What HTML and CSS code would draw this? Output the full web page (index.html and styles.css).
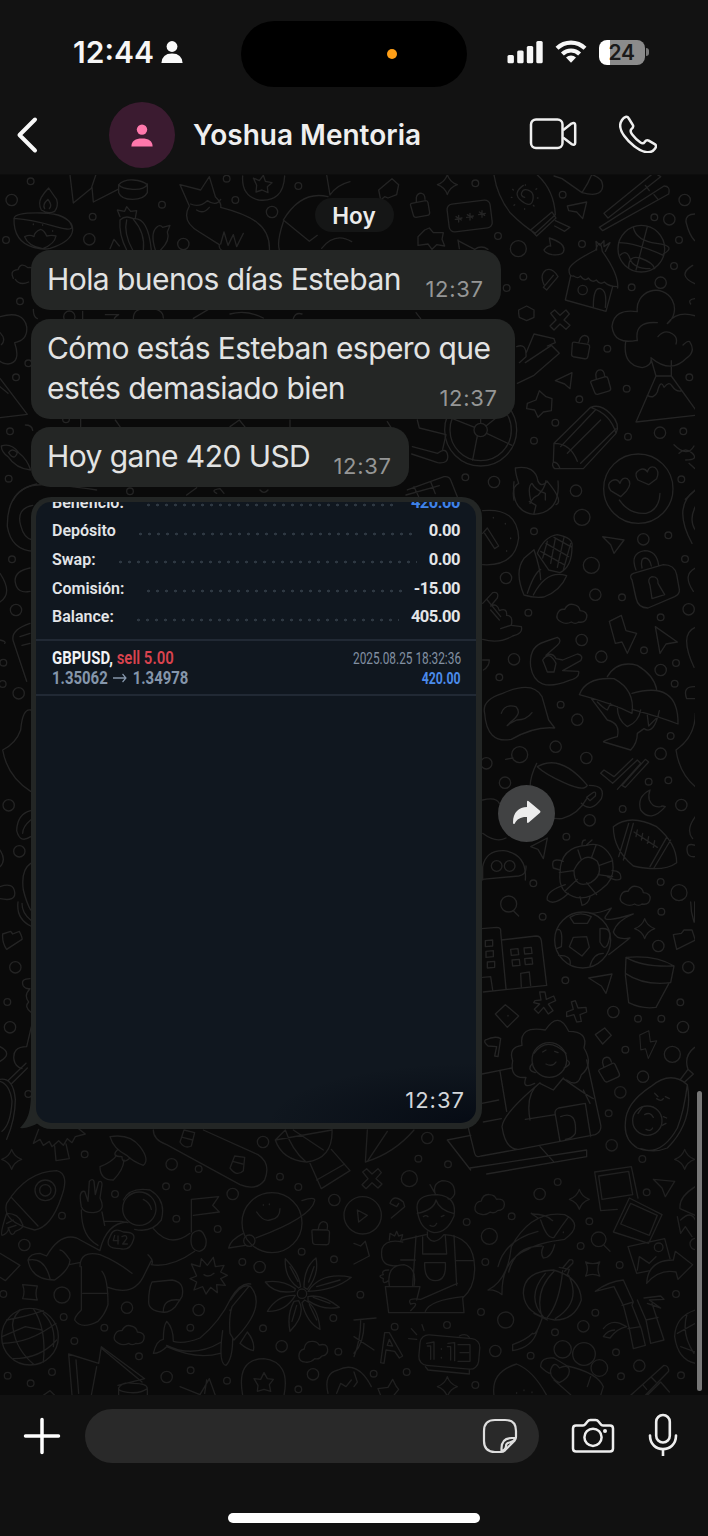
FILE: index.html
```html
<!DOCTYPE html>
<html lang="es">
<head>
<meta charset="utf-8">
<title>Yoshua Mentoria</title>
<link rel="stylesheet" href="styles.css">
</head>
<body>
<div class="phone">
  <header class="top">
    <div class="status">
      <div class="clock"><span class="clock-time">12:44</span>
        <svg width="22" height="24" viewBox="0 0 22 24" fill="#fafafa"><circle cx="11" cy="6.500" r="5.400"/><path d="M.4 23q.6-9.600 10.600-9.600T21.600 23z"/></svg>
      </div>
      <div class="island"><span class="island-dot"></span></div>
      <div class="indicators">
        <svg width="37" height="24" viewBox="0 0 37 24" fill="#f6f6f6"><rect x=".5" y="15" width="6.400" height="8.200" rx="1.500"/><rect x="10.200" y="10.500" width="6.400" height="12.700" rx="1.500"/><rect x="19.800" y="6" width="6.400" height="17.200" rx="1.500"/><rect x="29.300" y="1" width="6.400" height="22.200" rx="1.500"/></svg>
        <svg class="wifi" width="32" height="24" viewBox="0 0 32 24" fill="none" stroke="#f6f6f6" stroke-width="4.200"><path d="M2 8.300a20 20 0 0 1 28 0"/><path d="M7.400 14a12.300 12.300 0 0 1 17.200 0"/><path d="M16 22.800l-5-5.200a7.300 7.300 0 0 1 10 0z" fill="#f6f6f6" stroke="none"/></svg>
        <div class="battery"><span>24</span></div><i class="battery-tip"></i>
      </div>
    </div>
    <nav class="nav">
      <svg class="back" width="24" height="38" viewBox="0 0 24 38" fill="none" stroke="#f8f8f8" stroke-width="4" stroke-linecap="round" stroke-linejoin="round"><path d="M20 3.500L4.500 19 20 34.500"/></svg>
      <div class="avatar"><svg width="22" height="23" viewBox="0 0 22 23" fill="#ff78ac"><circle cx="11" cy="5.600" r="5.200"/><path d="M.4 22.400c0-5.500 4-8 10.600-8s10.600 2.500 10.600 8z"/></svg></div>
      <h1 class="name">Yoshua Mentoria</h1>
      <svg class="video" width="48" height="32" viewBox="0 0 48 32" fill="none" stroke="#efefef" stroke-width="2.500" stroke-linejoin="round"><rect x="2" y="1.500" width="31.500" height="28.600" rx="5"/><path d="M34 12.200l8.500-6.600q3.700-1.500 3.700 1.500v17.600q0 3-3.700 1.400L34 19.500"/></svg>
      <svg class="call" width="38" height="38" viewBox="0 0 38 38" fill="none" stroke="#efefef" stroke-width="2.500" stroke-linejoin="round"><path d="M3 5C5 2 8 .4 9.800 3.500l4.100 6.700c.9 1.500-.1 2.700-1.500 4-1.700 1.700-.9 3 .8 5.200 2.300 3 5 5.700 8 7.800 2 1.500 3.200 1.500 4.500-.3 1.200-1.500 2.500-2 4-1.200l6 3.500c2 1.200 1.500 2.700.2 4.500-4.500 6.300-13 3.400-20.600-2.500C7.600 25.300.6 16.500 1.200 9.800 1.400 7.800 2 6.500 3 5z"/></svg>
    </nav>
  </header>

  <main class="chat">
    <svg class="wallpaper" viewBox="0 175 708 1220" width="708" height="1220" fill="none" stroke-linecap="round" stroke-linejoin="round">
      <defs>
        <clipPath id="edge"><rect x="0" y="175" width="695" height="1220"/></clipPath>
        <circle id="s" r="10"/><circle id="m" r="17"/><circle id="l" r="24"/>
        <path id="star" d="M0-30Q7-8 30 0Q7 8 0 30Q-7 8-30 0Q-7-8 0-30z"/>
        <path id="cloud" d="M-34 24q-18-8-12-24t22-14q10-20 28-14q16 4 18 18q24 2 20 20t-24 14q-10 8-22 0q-16 8-30 0z"/>
        <path id="lock" d="M-24-8l42-8q6 0 7 6l5 30q0 7-7 8l-34 6q-7 0-8-7l-8-28q-2-6 3-7zM-10-12v-14q4-14 16-12q10 2 10 18"/>
        <path id="cross" d="M-28-20l12-10l16 16l18-16l10 12l-16 18l18 16l-12 12l-18-16l-18 18l-12-12l18-18z"/>
        <path id="bolt" d="M-26-34L8-50L14-8L38-12L6 54L-4 18L-22 22z"/>
      </defs>
      <g clip-path="url(#edge)">
        <g class="doodle" transform="translate(0 170) scale(.33333)">
          <path d="M42 145Q40 215 100 232Q130 240 150 235Q215 215 218 180Q220 148 165 133M42 145q4-18 84-16t90 42q-2 14-60-4t-114-22zM124 120q-10-20 0-38q8-14 22-28q12 18 24 34q6 20-6 36q-18 10-40-4zM134 116q-8-12 10-28q14 18 4 28M74 200q16-8 28 0q0-14 20-22q12 4 18 20q16-4 28 0q-4 24-40 38q-44-8-54-36zM100 162v2M128 164v2M158 182v2"/>
          <path d="M210 15l10 84l54-44l14-42M276 52l4 44l74-38M356 44v24q8 20 42 20t44-20v-26M356 44q16-16 44-14t42 14q-10 16-44 14t-42-14z"/>
          <path d="M540 44l28 64q-26 46 30 78l60 38q-4 20 30 24M540 44l62 16l26-40l18 60q20 20 16 32q78 20 110 46q40 30 36 88M572 102q26 12 50-10q26 18 40-4M590 120q20 14 38-8M662 222l10-36l12 40l16-32l10 36l20-40"/>
          <path d="M360 150q16-16 40-4q44-6 54 94M360 150q-4 44 20 90M380 150q-10 40 18 90M400 148q36 40 30 92M466 240q-16-50 4-68q10-10 18 0l22-6l-8 20q10 24-20 54M360 140l-8-20l22 4l6-14l12 14l18-2l-4 22M330 236l12-28l16 20"/>
          <path d="M728 18q-4 60 48 72q74 8 78-72M760 24l18 8l12-16l6 18l20 4l-14 12l2 18l-18-8l-18 6l2-20zM850 150q54-90 134-70M850 150l78 64l24-18M850 155q-20 60-12 85M980 15l10 60q20-30 60-40M965 235q40-50 90-20"/>
          <path d="M40 325q-12-24 14-26q8-24 30-6q26-4 20 24M46 328q14 20 40 8M0 440q70-20 80 30q4 40-36 48q20 60-20 64q-16 0-24-8M0 488q20 20 4 36M0 625l82 108l-82 10M0 650l24 20M100 418q0 24 12 28M76 765q20 0 22 16M4 828q30-10 52 20q26 20 36 52q-44-4-68-40q-20-14-20-32zM26 848q10-16 26 0q-10 26-26 0M40 990q20-40 70-45q40-5 180 15"/>
          <path d="M248 424v22M316 434h40q-16 10-12 14M400 446q0-32 40-30q50-2 50 28M580 445l44-26M690 432q50-14 100 12M880 446q6-20 26-14M242 748v24M346 750l14 20M690 770l28-20l18 22M870 750v22M560 975l30-22M650 970q-20-10 10-14l12 14M780 960q12 14 24 0"/>
          <use href="#m" x="35" y="90"/><use href="#s" x="92" y="34"/><use href="#m" x="268" y="208"/><use href="#s" x="278" y="140"/><use href="#s" x="486" y="104"/><use href="#m" x="816" y="126"/><use href="#s" x="706" y="90"/><use href="#s" x="680" y="26"/><use href="#s" x="895" y="48"/><use href="#m" x="550" y="222"/><use href="#s" x="18" y="210"/><use href="#s" x="60" y="394"/><use href="#s" x="48" y="622"/><use href="#s" x="85" y="580"/><use href="#s" x="30" y="784"/><use href="#s" x="26" y="926"/><use href="#m" x="208" y="440"/><use href="#s" x="390" y="964"/><use href="#s" x="198" y="748"/>
        </g>
        <g class="doodle" transform="translate(354 170) scale(.33333)">
          <path d="M420 15Q430 80 470 130Q510 170 544 190L604 134Q600 60 550 15M530 180l64-54l12 18l-58 54zM604 152l44 20l-16 12l-30-16M512 82q-14-4-8-16t22-4t10 30t-34 0t6-46M514 44v2M476 58l2 2M472 82h2M480 106l2-2M512 116v2M548 56l-2 2M552 84h-2M540 108l-2-2"/>
          <rect x="282" y="96" width="130" height="84" rx="16" transform="rotate(-7 347 138)"/><path d="M314 136v20M304 148l20-4M306 140l16 10M348 130v20M338 142l20-4M340 134l16 10M384 122v20M374 134l20-4M376 126l16 10"/>
          <path d="M600 18l24 8l60 42q50 14 60-10q10-30-30-44M684 68q20-30 30-56M750 130L900 8l20 12L762 144zM736 172L930 48q20 0 14 24L746 182zM874 46l12 16M900 74l12 14M640 108l58-12l-12 50l-18-20l-24-4z"/>
          <circle cx="862" cy="236" r="70"/><path d="M794 218q50 0 134 38M838 172q8 40 70 48t20 32M824 294q0-40 34-30q40 14 44 32M798 256q20-20 30 10t60 30M880 170l-34 130"/>
          <path d="M645 300q0-20 80-60q14-40 20 4q50 70 46 110M650 318l-16 72l122 34l20-74M645 300q0 20 14 18q14 10 20 0q14 18 24 6q12 16 24 6q12 16 24 6q14 14 40 14M718 410q0-60 22-54q20 6 14 56M728 240l-2-26l12 12l12-14v18l18-12l-14 26"/><circle cx="686" cy="360" r="14"/>
          <path d="M850 425a56 56 0 1 1 90 36M850 425q-70-10-76 44q6 56 74 42M850 512q-10-60 60-54M815 515q-10 70 50 78q30-6 26-30q60 50 106 2q30-20 10-50q-6-4-20 10M940 460q30-40 85-22M912 500q20-24 44-8q16 10 10 30M892 570l14 48h46v-46M906 618l-60 138l178-20M952 618l72 100M880 676q20 12 30-10q10-40 20-14q16-20 24-4q14 20 30 14"/>
          <path d="M600 820L710 712q30-12 60 20q30 30 16 58L688 896H602q-10-10-4-20zM620 830L724 720M680 880L786 776M640 850L740 750M600 820q50 0 70 54M710 712q60 20 76 78M598 876q14 0 20 20"/>
          <circle cx="380" cy="780" r="108"/><circle cx="380" cy="780" r="92"/><circle cx="380" cy="780" r="20"/><path d="M380 760V690M398 790l76 36M370 798l-14 72M362 772l-76-30M396 768l60-48M175 830l76 20q26-20 30 6t-30 22l-78-26M190 750l6 24l80 20l-10 44M100 755l50 80"/>
          <circle cx="853" cy="956" r="104"/><path d="M800 980l-30-18q-14-20 4-30q16-8 24 8q6-20 22-14q16 12-2 36zM884 944l-32-14q-14-20 4-30q16-8 24 6q6-20 22-14q16 12 6 34z"/>
          <path d="M480 990q-8-40 14-50q-10-30-10-46q60-10 68 40q10 20 28 0q50 60 26 70M530 990q-10-40 4-50q10 20 40 30v20M160 960l110-40q16-2 20 10l20 50M180 950l14 30M230 935l14 36M156 975l100-28"/>
          <path d="M192 200l20-20l14-6l12 14h30l-4 20l8 20l-24-4l-14 14l-12-16l-30 4zM570 240q10-14 20-12l-4-24q44 14 44 34t-36 16q-20-4-24-14zM494 430v-10l24-12l22 12v22l-22 10l-22-10zM312 210l4 26M312 212l50 26q20-14 40 0M520 700l26-10l10-28l20 18l18 6l-2 36l-24 4l-16 16l-10-22l-24-4zM604 632l50-24l-6 48l-16-14zM488 530q30-12 28 30l-20 18M490 640l50-24l76-66l-24-24l-78 52M516 550l24-58l60 14l4 12l-24 10M74 60l40-34l20 18l-6 30l-26 10l-10-4l-12 10zM186 428l14 18M570 344q-14-30 6-44q20-8 36 20l-34 40l-10-8l30-36M1024 132q-30 0-28 24q10 40 26 56M1016 286q-50 30 8 56M1024 386q-24 2-14 16M960 824q40 40 60 4M975 850q20-20 40 0t-20 20M1005 880l18 16M1024 960l-30 28"/>
          <use href="#star" x="280" y="44"/><use href="#lock" transform="translate(197 108)"/><use href="#lock" transform="translate(680 532) rotate(20)"/><use href="#lock" transform="translate(738 638) rotate(-6)"/><use href="#cross" x="618" y="450"/>
          <use href="#s" x="364" y="40"/><use href="#s" x="432" y="198"/><use href="#l" x="493" y="236"/><use href="#s" x="684" y="222"/><use href="#s" x="626" y="74"/><use href="#m" x="992" y="90"/><use href="#m" x="946" y="148"/><use href="#s" x="901" y="142"/><use href="#s" x="975" y="210"/><use href="#s" x="960" y="288"/><use href="#m" x="920" y="338"/><use href="#s" x="833" y="352"/><use href="#s" x="508" y="320"/><use href="#s" x="458" y="354"/><use href="#s" x="760" y="536"/><use href="#s" x="818" y="656"/><use href="#s" x="1006" y="622"/><use href="#s" x="676" y="688"/><use href="#s" x="604" y="758"/><use href="#s" x="540" y="812"/><use href="#s" x="822" y="800"/><use href="#m" x="918" y="788"/><use href="#s" x="988" y="784"/><use href="#m" x="420" y="936"/><use href="#s" x="334" y="922"/><use href="#m" x="666" y="962"/><use href="#s" x="982" y="928"/>
        </g>
        <g class="doodle" transform="translate(0 480) scale(.33333)">
          <path d="M110 12Q20 30 22 140Q34 210 100 214M98 76q-50 10-36 60q10 40 36 44M0 280q40 60 0 86M90 264q-50 10-44 44t44 26M90 430q-60 20-50 54l40 120M60 470l30-10M66 496l24-6M0 480q20 4 14 10"/><use href="#s" x="36" y="238"/><use href="#m" x="48" y="390"/><use href="#s" x="10" y="548"/><use href="#s" x="8" y="612"/><use href="#m" x="56" y="640"/>
        </g>
        <g class="doodle" transform="translate(0 690) scale(.33333)">
          <path d="M92 60q-24-6-30 60q-14 40-54 60q14 80 84 124M92 362q-40 10-42 60q10 40 42 18M68 430q0-20 24-40M0 480q20 30 0 50M0 590q40-14 44 16t-44 20M92 520q-30 20-22 80q10 40 22 60M54 636q-6 50 38 72M66 640q0 30 26 50M8 732l24-8l6 8l20-8q10 20 8 24l-46 30q-14-20-12-46zM90 866q-30 0-20 22q6 10 20 8q-20 20-4 40q-14 14 6 30M94 1010l-14 60q-44 0-38 40q4 20 24 26M0 1070q40 20 0 44M0 1168q40-6 46 60q0 60-26 120M26 1170l52-50M36 1180l46-46M0 1174q30 10 36 60q-4 70-30 90"/><use href="#m" x="26" y="346"/><use href="#m" x="58" y="484"/><use href="#m" x="46" y="832"/><use href="#s" x="22" y="936"/><use href="#m" x="30" y="1012"/><use href="#s" x="85" y="1212"/>
        </g>
        <g class="doodle" transform="translate(354 480) scale(.33333)">
          <path d="M480 5q-10 90 60 98q80-6 72-100M528 70q10-20 24-24q20-20 24-44M526 64l20 12l-6 24M796 60q30 44 80 40q40-10 42-60"/>
          <path d="M386 92q104-10 108 82q-10 86-108 80M386 160l14-16l34 54l-12 8l-30-46M418 112v2M454 130v2M470 174v2M458 212v2"/>
          <path d="M510 345q-30-70 0-110l30-26q20 60 20 90M510 345q30 10 60 6q50-20 68-64q-60-20-100 58M520 340q20-60 40-72M550 220q20-50 60-56q50 10 44 36q0 60-36 78l-34-8zM560 214l70 40M576 190l68 40M600 172l54 30M580 184l-14 50M604 176l-14 74M630 172l-20 90M650 190l-22 80"/>
          <path d="M746 170l64 10l-30 40l-10-26zM846 270q-20-50 26-58q36 0 42 44M864 264q-6-30 10-30q14 2 18 24M834 300q-10-14 4-20l90-26q34 0 40 30l8 44q2 14-14 22l-80 34q-30 0-36-30zM888 316q-10-20 6-26q20 0 18 20l20 34l-38 12z"/>
          <path d="M386 370l30-32q20-4 14 16l-20 24q20-10 26 14q24-10 22 14q20 0 14 30l30 4q6 20-26 28q-40 24-90 10M400 360l40 50M410 390l26 30M440 446l30-10M530 560q-6-60 40-74l40-14q16 8 0 24l-34 30q20-10 30 10l20 4l44-18q20 4 10 20l-54 30l48 2q4 20-30 28q-100 40-114-42zM566 540q20-30 40 10l-6 26h-20z"/>
          <path d="M392 700q-10-40 54-60q90-40 118 10l20 70l18 24q-60-6-130 34q-74 14-80-78zM442 700q10-30 44-20q20 20-16 46q-20 20-2 4l20-10q30 0 46-22M386 540h20q0 20-18 30"/>
          <path d="M676 644q20-54 104-48q64 34 54 104q-60-30-158-56zM760 590q30-50 90-34q50 30 58 72M834 640q140-40 138 92q-50-20-138-44M712 656l48 64q40 10 30 50q-50 14-40 16l80 24q20-20 20-50l20-14q30 20 46-54M730 666q20 20 30 24l10-20M790 680q0 40 30 60q34-14 40-50M880 706l4 32l30-30"/>
          <path d="M740 880l36 30L850 840l10 10l-70 78M740 880l10-10l30 20l56-54M804 916l70-78l10 8l-70 76zM766 424l36-18l14 46l32 8l-28 60l-16-34l-20 4zM904 440l66 46l-34 6l-18 28zM1024 30q-70 50-10 160M1024 80q-20 40 0 70M1024 264q-40 20-6 70M1024 442q-50 20-4 120M1024 620q-40-2-26 36h26M1024 700q0 70-58 110q10 70 58 110M1024 1010q-30 40-8 66M1024 1096q-30-10-24 20q2 16 24 14"/>
          <path d="M550 860q70-40 150 56q-10 20-70-8t-80-48zM548 850q-30 60-14 100q20 70 90 66q50-14 74-60M706 916q50 0 36 40q-30 44-60 14M714 940q14-10 10 8l-16 14l-10-10z"/><path d="M888 930q-40 20-28 60q30 40 74-10q-10-4-14 0q-24 4-34-20q-4-14 2-30zM778 1040q50-40 130 0q60 50 60 108q-40 30-130 10q-60-50-60-118zM824 1030l-30 100M838 1030l-30 110M950 1080l-50 84M938 1072l-50 88M840 1056l70 46M850 1050l-4 20M866 1060l-4 20M884 1070l-4 20M902 1082l-4 20"/>
          <path d="M386 960q40-10 50 10M386 1060q40 30 70 14M530 1100l50-26l-12 62l-16-28zM386 1200v-40q10-50 64-48q70 10 64 88"/><circle cx="428" cy="1158" r="16"/><circle cx="467" cy="1158" r="16"/><circle cx="497" cy="824" r="24"/><path d="M477 834l-22 4"/>
          <use href="#cloud" x="656" y="402"/><use href="#l" x="684" y="112"/><use href="#l" x="712" y="256"/><use href="#s" x="540" y="154"/><use href="#m" x="456" y="294"/><use href="#m" x="724" y="344"/><use href="#s" x="804" y="352"/><use href="#m" x="868" y="178"/><use href="#s" x="943" y="166"/><use href="#s" x="993" y="237"/><use href="#m" x="1004" y="388"/><use href="#s" x="920" y="412"/><use href="#s" x="523" y="398"/><use href="#m" x="683" y="480"/><use href="#m" x="742" y="530"/><use href="#m" x="480" y="538"/><use href="#s" x="436" y="592"/><use href="#s" x="870" y="511"/><use href="#s" x="966" y="549"/><use href="#m" x="920" y="570"/><use href="#s" x="962" y="611"/><use href="#s" x="620" y="674"/><use href="#m" x="670" y="719"/><use href="#m" x="605" y="800"/><use href="#m" x="697" y="834"/><use href="#s" x="950" y="768"/><use href="#m" x="920" y="821"/><use href="#s" x="884" y="905"/><use href="#s" x="943" y="901"/><use href="#m" x="982" y="975"/><use href="#s" x="806" y="987"/><use href="#m" x="707" y="1021"/><use href="#s" x="637" y="1070"/><use href="#m" x="397" y="850"/><use href="#m" x="453" y="908"/>
        </g>
        <g class="doodle" transform="translate(440 840) scale(.33333)">
          <path d="M126 118l110-10q24-4 22-30M360 100q0-80 80-84q50-14 76 40q14 60-30 90q-60 50-110 10q-20-20-16-56zM402 90q30-60 70-26q20 40-20 64q-50 20-50-38zM424 60l-10-30M454 54l14-38M478 76l40-14M474 104l44 6M440 128l30 36M412 118l-36 34M400 92l-42 6M370 64q-40-14-30 20l20 6M376 134q-60 20-54 46q20 20 64-20M420 170l6 26q20-4 24-26M516 92q30 0 26 24q-10 10-40-6M426 14q0-14 10-14M440 14l16-14"/>
          <circle cx="428" cy="300" r="84"/><path d="M388 320l12-28l40-2l8 32l-22 26zM390 232q30-20 64-2l-12 20h-40zM480 266q30-4 30 20q-10 60-30 20zM350 270q20-10 14 50l-14 6M356 346q40 0 34 28M490 340q-30 0-40 38M450 220q30 0 64-16l-18 26q-10 20 84-8q-50 20-60 54q10 26 50 18l-64 50"/>
          <path d="M126 266l44-4q14 0 12 14l16 170M184 300l104-12q14 0 16 14l16 134l-190 20M212 328l22-2l2 18l-22 2zM252 324l22-2l2 18l-22 2zM216 360l22-2l2 18l-22 2zM254 356l22-2l2 18l-22 2zM244 440l-2-40l26-4l4 40M136 302l22-2v18l-22 2zM138 334l22-2v18l-22 2zM142 366l22-2v18l-22 2zM128 412l24-2l6 40"/>
          <path d="M558 352q90-8 144 26l-10 50q-80 10-136-28zM558 352q50 30 144 26M556 404l10 84q40 20 82 14l40-74M446 414l70-12l-18 58l-14-22zM700 284l24-4l8-10h24l10 30l-56 28zM166 522l30-28l40 34l-34 34zM204 526v2M466 584l28-20l20 22l-26 26zM136 600q30-14 46-4l-8 54l-10-2l6-28l-26-2q-14-12-8-18M752 186q0 30 10 60M764 186v60"/>
          <path d="M285 482l18-2l-4-24h16l4 22l22-10l6 14l-22 10l14 20l-14 10l-14-20l-16 18l-12-12l16-16l-18-4zM406 482l8 22l24-2l2 14l-20 8l4 20l-14 2l-8-22l-22 6v-14l20-8l-6-22z"/>
          <path d="M284 730q-40 20-26-18q-50 6-40-50q-14-40 28-46q-10-60 70-46q40-60 70 4q60 0 46 50q30 50-8 80q-10 40-44 16"/><circle cx="328" cy="660" r="52"/><path d="M278 670q-20 20 8 28M380 660q20 10-8 24M282 640q40-54 96 0M300 730l40 20l30-36M308 636l10-6M344 634l10 4M318 672q20 10 30-6M300 728Q190 820 186 860q10 70 50 68l230-44q20-10 16-30L440 660M270 840q-14-80 28-110M370 716q70 50 90 60M180 694l20 120M126 702l90-18M126 790l50-10M84 860l20 80q4 14 20 8l110-20M130 846l54-10M256 838l90-14l14 80M346 824q-4-14 10-20l80-14l16 100M362 830q50-20 44 50q-10 16-30 18M22 900l70-14M22 900l70 90M90 984l350-54v20l-300 52M300 920l40 44M430 750l20 40"/>
          <path d="M556 850q0-60 76-110q60-50 110-6q-10 80-30 130q-50 90-120 60q-40-24-36-74zM742 734q20 110-60 190q-40 16-80 2M720 720l24-32q-14-40 20-66M734 726l26-24l-16-14"/><circle cx="622" cy="842" r="44"/><path d="M594 820l14-20M614 824q16-10 26 8M618 868q14 8 20-4M670 830l10 4M666 856l12-6M644 760l10 10M650 776q14 10 20 0M676 770l12 6"/>
          <use href="#cloud" x="588" y="168"/><use href="#star" x="614" y="266"/><use href="#lock" transform="translate(504 690) rotate(-15)"/><use href="#bolt" transform="translate(620 612) scale(.8)"/><circle cx="206" cy="192" r="24"/><path d="M220 212l16 16"/>
          <use href="#s" x="280" y="130"/><use href="#s" x="308" y="230"/><use href="#s" x="662" y="126"/><use href="#l" x="717" y="158"/><use href="#s" x="664" y="215"/><use href="#m" x="655" y="318"/><use href="#m" x="745" y="382"/><use href="#s" x="376" y="421"/><use href="#m" x="520" y="516"/><use href="#s" x="594" y="536"/><use href="#s" x="664" y="536"/><use href="#s" x="721" y="487"/><use href="#m" x="729" y="561"/><use href="#s" x="556" y="629"/><use href="#l" x="697" y="643"/><use href="#m" x="609" y="710"/>
        </g>
        <g class="doodle low" transform="translate(0 1080) scale(.33333)">
          <path d="M100 190l16-42M100 190l20-12l10 18l18-12l8 16l20-18l14 14l12-20l14 12l10-18l30-8l-26-20M164 198l4 44l40-6l-10-44M330 170q60-10 90 30q30 40 10 56q-30-10-50-30q-40-20-50-56zM352 210q-20 20 14 20q0 24 24 4M350 226q-14 20-50 34q0 40 40 40q30-30 32-60"/>
          <path d="M460 150q0 30 40 44l220 120q50 20 74-14q20-50-20-76L610 150M540 186l12-36l32 8l-10 40q-20 10-34-12M548 172l30 8M690 264l14-36l30 4l-4 40q-20 20-40-8M698 244l30 8M826 180q20 60 94 66q80-10 76-98M826 180l30-30M826 180l170-30M856 150q20 60 60 94M880 150l90 60M930 250l34 76l86-54l-56-64M950 300l84-48"/>
          <path d="M20 370q60-96 150-98q40 10 14 80q-30 90-80 98q-100-24-84-80zM34 352l80 86M20 400q-20 60-14 66q16-4 20-20q10 30 20 8q30-10 20-24q-10-30-46-30M20 430l20-10M24 444l24-8"/><circle cx="136" cy="331" r="31"/><circle cx="136" cy="331" r="17"/>
          <circle cx="418" cy="386" r="50"/><path d="M370 360q20-40 80-30q50 30 34 90q-30 40-80 28M430 358q20 10 24 30M244 380q-10-50 10-46l10 30l4-60q10-10 14 0l4 40l10-38q10-6 10 8l-6 40q20 40-20 44q-30 0-36-18zM244 390q0 80 50 106M306 396l8 40M314 424h50l20 4M300 510q20-80 80-84M460 446q50 60 110 14M444 524q20 20 10 30q60 10 130-40M574 470q-6 40 24 44q24-6 20-36q-10-30-24-26q-20 4-20 18zM574 456v-98l82-8l-18 26l20 20l-78 10M330 470q10-30 40-14q40 0 30 24q-10 34-40 26q-50 0-30-36M344 466l-4 16h16M354 468v24M366 470q16-8 14 6l-12 16h14M140 528q40-70 90-54l70 38M140 528l-20-8q-30 0-36 20q10 60 80 60q44-30 46-60q-20-30-30-30M84 540q50-10 66 56M208 554l30-6M240 560q0-50 60-36q50 20 96 56M244 560v130q-20 20-20 30q20 30 70 4q20-20 30-50q0-80-18-100M248 640h76M324 622q80 30 110-40l20-40"/>
          <circle cx="816" cy="428" r="90"/><path d="M906 362q40-14 38 0q-10 50-176 112M730 460q-40 20-44 44l50-8"/><circle cx="748" cy="482" r="17"/><path d="M770 396q20 30 40 24q30-4 30-34M790 374v2M808 372v2M0 520l60 36l-44 46l-16-10M68 614l44 4q-8 24 0 42l-44-4q8-20 0-42zM456 606l60-6q40 6 30 50l-20 30q-20 20-40 16q-40-4-40-30q0-40 10-60zM490 694q0-40 50-34"/>
          <path d="M574 552l26 8l4-24l18 20l18-24l6 28l26-4l-10 20l20 10l-20 10l14 20l-26-2l2 24l-20-16l-14 20l-10-22l-26 10l8-24l-20-10l20-8zM612 584q14 10 30-4"/>
          <path d="M692 660q34-54 60-40q50 60-50 160l-12-20q-4-50 6-80l50-60M460 820q10-40 30-42q0-40 10-54q20 20 20 60q30 10 80-10q60-50 92-118q30-50 60-44M460 820q20 0 40-20q90 40 160 20M500 796q80 40 164-10M668 752q-14 100 10 104q20-20 20-80M720 790l22-34q24 30 18 56q-20-4-40-22M690 690v2"/>
          <circle cx="906" cy="641" r="14"/><path d="M896 624q-44-30-40-88q40 40 46 84zM912 622q0-60 36-88q10 50-26 94zM924 634q40-60 130-42q-50 40-130 42zM924 650q40-10 94 32q-50 10-94-20zM914 660q40 20 46 88q-40-20-54-80zM896 662q24 40-26 92q-10-50 12-90zM886 646q-30 50-84 48q30-50 84-48zM884 634q-60 10-88-28q50-8 90 20zM870 560l24 44M942 560l-16 46M1020 600l-70 20M990 670l-50-18M950 720l-22-46M876 724l14-48"/>
          <circle cx="90" cy="770" r="85"/><path d="M20 720q60-10 110-28M8 790q80 0 160-60M40 836q80 0 130-56M60 690q-30 30-20 60q10 60 60 102M100 686q40 60 30 160M130 700q40 40 30 100M6 770l70-30l50 10"/><path d="M206 822l90 28M206 822l10 124M228 840l8 100M296 850l8-50l130 96l-80 20M306 806l120 100M290 860l-16 86M356 924q10-20 46-14q40 0 40 16q-20 14-50 12q-40-4-36-14v24M442 926v20M540 920l60 24l28-48l18 50M620 900l-6 40M728 946q-20-110 64-110q80 10 60 110M762 896l20 2l10-20l10 18l18 2l-12 16l4 20l-20-6l-20 6l2-18zM984 940q-14-60 30-70q60-30 100 50M1010 940l12-30l16 10l16-20M130 946l20-14l14 14"/>
          <use href="#star" x="35" y="238"/><use href="#lock" transform="translate(962 462) rotate(12)"/><use href="#cloud" x="390" y="766"/><use href="#cloud" transform="translate(940 812) rotate(-20)"/>
          <use href="#s" x="254" y="223"/><use href="#m" x="515" y="253"/><use href="#s" x="596" y="267"/><use href="#s" x="498" y="319"/><use href="#s" x="562" y="321"/><use href="#s" x="345" y="342"/><use href="#m" x="698" y="342"/><use href="#m" x="789" y="186"/><use href="#s" x="840" y="290"/><use href="#s" x="895" y="321"/><use href="#m" x="1003" y="360"/><use href="#s" x="186" y="407"/><use href="#s" x="529" y="416"/><use href="#s" x="653" y="447"/><use href="#m" x="73" y="495"/><use href="#s" x="905" y="515"/><use href="#s" x="727" y="546"/><use href="#m" x="779" y="561"/><use href="#s" x="1002" y="538"/><use href="#s" x="10" y="642"/><use href="#l" x="186" y="645"/><use href="#m" x="381" y="683"/><use href="#m" x="596" y="690"/><use href="#s" x="191" y="711"/><use href="#s" x="313" y="743"/><use href="#s" x="571" y="743"/><use href="#s" x="789" y="745"/><use href="#s" x="1000" y="714"/><use href="#s" x="223" y="783"/><use href="#m" x="845" y="799"/><use href="#s" x="417" y="829"/><use href="#s" x="156" y="876"/><use href="#s" x="23" y="887"/><use href="#s" x="92" y="910"/><use href="#m" x="500" y="891"/><use href="#s" x="572" y="871"/><use href="#s" x="681" y="902"/><use href="#m" x="939" y="883"/><use href="#s" x="895" y="928"/><use href="#s" x="1015" y="815"/>
        </g>
        <g class="doodle low" transform="translate(354 1080) scale(.33333)">
          <path d="M40 150l-6 96Q120 220 180 150M40 244l60-90"/>
          <path d="M190 390q-8-46 60-46q60 6 50 64q-20 50-60 50q-44-10-50-68zM190 400q50-10 56-40q10 30 52 40M244 342q-10-30 20-40q40 0 38 40q-10 20-20 14M228 314l14 24M208 410q8-6 14 0M262 410l8-4M228 436q14 8 20-6M220 456v14q20 30 50-6M146 480l70-16M270 464q90 4 92 100q0 60-36 90l4 44H104l-10-78h104l-10 40M186 468l-10 150M206 470v52h72l-4-54M300 466l8 150M212 548h62q4 54-30 54t-32-54M306 542h54M140 540h44M328 650q-100 10-114 44M310 610l-110 48q-44-6-30 14q30-8 0 20"/>
          <path d="M146 486q-50-10-62 20q-10 60 52 50M106 480l2-20l14 8l6-14l6 14l12-4l-6 20M106 616q-10-60 44-62q40 10 30 64M104 570q-24 0-16 14q-20 4 0 12q-4 20 16 6"/>
          <path d="M402 630q60-30 70-130q60-110 160-96q60 30 0 74q-80 10-110 30q-80 30-78 136q-20-16-42-14zM432 560q20-80 120-106M464 576q20-80 100-78M552 414q-30-20-16-12q40 0 60 20M560 420q20 60 40 52q20-30 44-62M602 494q-10 40-34 40q-10-14 0-34M628 456v2"/>
          <path d="M508 640q0-66 90-70q80 20 84 90q-20 60-80 60q-90-14-94-80zM574 580q-60 70-6 130M600 574q-60 60-36 136M626 572q-10 100-46 140M644 586q40 80-40 130M600 570l40 16l6-18l-30-6M626 564l20-24q14-4 10 10l-24 24M540 700l40 20M566 710q-20 60-30 50q-20 20-60 34v18q60-10 74-60"/>
          <path d="M722 276l110-16l20 94M722 276l18 116l50-4M734 288l90-14l12 70l-92 14zM826 354l98 50l-40 86l-106-34zM830 370l80 36l-24 60l-86-34zM822 500l110-24l16 60M822 500l26 80l40-8M850 570l6-40l30 20l20-20"/><circle cx="914" cy="502" r="13"/><path d="M878 610q4-70 80-70l6-26l52 40l-44 44l-6-22q-50-10-88 34zM898 298l64 6l-28 46l-10-26zM1024 320q-50 30-46 66l46 20M970 410l10 50l14-20l20 30M980 420q30-30 44 0M1024 690q-60 20-62 80q10 70 62 80M970 760l54-30M1000 700q-20 60 20 120M980 800l44 16"/>
          <path d="M724 634q40-30 84-34l30 66l-4 10l28 70l12 50l-36 10l-12-60l-18-70l-28-56zM804 676l34-10M822 746l38-6M748 746q20-26 50-16l20 10q-30 6-50 34l-20-4q14-20 34-20M850 660l26 60l14 70l40-10l-20-60l-16-50M876 720l36-8M870 654l50-6l10 10l-44 2l34 24l-40-14"/>
          <circle cx="26" cy="406" r="56"/><path d="M10 390l30 16l-26 20zM108 370q10-30 40-4l4 14l-40 34M108 370l20 10l6-10M0 490l20 8l14-14l12 44l-46 24M0 720l66-6M20 720q0 60-20 110M30 730q0 60-30 90M0 770l60 40M80 848l12-90h14l40 70l-10 6l-14-20l-26-4l-6 40zM100 796l6-18l10 20z"/>
          <rect x="196" y="770" width="180" height="92" rx="26" transform="rotate(5 286 816)"/><path d="M214 860l8 10l124 12v-12M316 768q20-10 30 4M164 776l24 2M172 746l16 18M204 734l6 18M218 790l22-4v52M220 798h10v40M262 806v2M262 832v2M282 790l20-2v54M312 794h36v50h-36M318 818h26M280 800h10v40"/>
          <path d="M560 860q0-30 40-26l40 24q90 20 108 62l-8 26M590 870q10-30 26-6q30-14 30 10q0 20-30 34q-30-14-26-38zM600 900l50 44M700 920l10-30M560 860q20 20 30 20M420 946q-10-70 68-94q50 20 90 94M510 930v2M488 938v2M534 936v2M830 946l100-90q14 0 14 18l-70 72M880 946l40-40l26 30M866 914l12 14M892 892l14 14M80 946l-8-20l30-4l14-24l10 20l8 10l-16 20M0 876l10 30l-10 14"/>
          <circle cx="626" cy="808" r="26"/><circle cx="690" cy="822" r="34"/><circle cx="736" cy="864" r="25"/>
          <use href="#cross" x="54" y="296"/><use href="#cloud" transform="translate(408 372) rotate(-12)"/><use href="#star" x="676" y="358"/><use href="#star" x="992" y="238"/><use href="#star" transform="translate(716 567) rotate(45)"/><use href="#star" x="280" y="920"/><circle cx="734" cy="478" r="22"/><path d="M750 496l18 18"/>
          <use href="#m" x="220" y="174"/><use href="#s" x="193" y="236"/><use href="#s" x="282" y="253"/><use href="#l" x="166" y="296"/><use href="#m" x="799" y="37"/><use href="#s" x="764" y="100"/><use href="#m" x="773" y="196"/><use href="#s" x="865" y="237"/><use href="#s" x="611" y="306"/><use href="#m" x="557" y="342"/><use href="#s" x="473" y="409"/><use href="#s" x="338" y="426"/><use href="#l" x="406" y="469"/><use href="#s" x="394" y="546"/><use href="#s" x="706" y="424"/><use href="#s" x="878" y="337"/><use href="#s" x="680" y="498"/><use href="#s" x="797" y="555"/><use href="#m" x="1025" y="492"/><use href="#s" x="966" y="642"/><use href="#s" x="19" y="644"/><use href="#s" x="381" y="696"/><use href="#l" x="455" y="720"/><use href="#s" x="122" y="740"/><use href="#s" x="279" y="735"/><use href="#s" x="724" y="698"/><use href="#m" x="688" y="739"/><use href="#s" x="603" y="757"/><use href="#m" x="424" y="813"/><use href="#s" x="530" y="827"/><use href="#s" x="786" y="817"/><use href="#m" x="856" y="857"/><use href="#s" x="801" y="889"/><use href="#s" x="981" y="886"/><use href="#s" x="59" y="881"/><use href="#s" x="158" y="876"/><use href="#s" x="364" y="915"/>
        </g>
      </g>
    </svg>

    <div class="day"><span>Hoy</span></div>
    <div class="messages">
      <div class="bubble b1"><p>Hola buenos días Esteban</p><time>12:37</time></div>
      <div class="bubble b2"><p>Cómo estás Esteban espero que<br>estés demasiado bien</p><time>12:37</time></div>
      <div class="bubble b3"><p>Hoy gane 420 USD</p><time>12:37</time></div>
      <div class="photo-row">
        <div class="photo">
          <svg class="tail" width="20" height="40" viewBox="0 0 20 40"><path d="M11 0C11 20 9 29 0 38q8 1 20-6z" fill="#232625"/></svg>
          <div class="statement">
            <dl class="stats">
              <div class="row"><dt>Beneficio:</dt><dd class="blue">420.00</dd></div>
              <div class="row"><dt>Depósito</dt><dd>0.00</dd></div>
              <div class="row"><dt>Swap:</dt><dd>0.00</dd></div>
              <div class="row"><dt>Comisión:</dt><dd>-15.00</dd></div>
              <div class="row"><dt>Balance:</dt><dd>405.00</dd></div>
            </dl>
            <div class="trade">
              <div class="trade-left"><div class="pair">GBPUSD, <span>sell 5.00</span></div><div class="prices">1.35062 <svg width="17" height="10" viewBox="0 0 17 10" fill="none" stroke="#8596ab" stroke-width="1.500"><path d="M0 5h15.500M11.500 1l4 4-4 4"/></svg> 1.34978</div></div>
              <div class="trade-right"><div class="stamp">2025.08.25 18:32:36</div><div class="gain">420.00</div></div>
            </div>
            <time class="photo-time">12:37</time>
          </div>
        </div>
        <button class="forward" aria-label="Reenviar"><svg width="30" height="26" viewBox="0 0 30 26" fill="#ececec"><path d="M15 1.500Q15.500.2 16.700 1.200L28 10.800q1 1 0 2L16.700 22.600q-1.500 1-1.700-.6V17C9 16.700 5 19 2.800 23.500q-1.600 1.400-1.800-1C1 12 7 7.400 15 7z"/></svg></button>
      </div>
    </div>
    <div class="scrollbar"></div>
  </main>

  <footer class="composer">
    <div class="compose-row">
      <svg class="plus" width="38" height="38" viewBox="0 0 38 38" stroke="#fff" stroke-width="3.500" stroke-linecap="round"><path d="M2.500 19h33M19 2.500v33"/></svg>
      <div class="field"><svg width="36" height="36" viewBox="0 0 36 36" fill="none" stroke="#dedede" stroke-width="2.200" stroke-linejoin="round"><path d="M13 2h10q11 0 11 11v6q0 2-1.500 3.800l-9.500 9.500Q21 34 19 34h-6Q2 34 2 23V13Q2 2 13 2zM19.500 33.500v-3q0-10.500 10.500-10.500h3.500M19.500 33.500q4.500-2 4.500-5.500 0-3 3.500-3.500 4-.5 6-4"/></svg></div>
      <svg class="camera" width="44" height="36" viewBox="0 0 44 36" fill="none" stroke="#eee" stroke-width="2.500" stroke-linejoin="round"><path d="M5 7.500h7q1.500 0 2.500-1.500l2-2.500q1-1.500 3-1.500h5q2 0 3 1.500l2 2.500q1 1.500 2.500 1.500h7q3 0 3 3v20q0 3-3 3H5q-3 0-3-3v-20q0-3 3-3z"/><circle cx="22" cy="19.300" r="8.600"/><circle cx="34" cy="13" r="2" fill="#eee" stroke="none"/></svg>
      <svg class="mic" width="30" height="44" viewBox="0 0 30 44" fill="none" stroke="#eee" stroke-width="2.600"><rect x="8.200" y="2" width="13.600" height="27.500" rx="6.800"/><path d="M2 22.500c0 18.200 26 18.200 26 0" stroke-linecap="round"/><path d="M15 36.500v6.500"/></svg>
    </div>
    <div class="home"></div>
  </footer>
</div>
</body>
</html>
```
FILE: styles.css
```css
* { box-sizing: border-box; }
body { margin: 0; background: #111; font-family: Inter, "Liberation Sans", sans-serif; }
p, h1, dl, dd { margin: 0; }
svg { display: block; flex: none; }

.phone { width: 708px; height: 1536px; display: flex; flex-direction: column; overflow: hidden; background: #111; }

.top { height: 175px; flex: none; background: #121212; border-bottom: 1px solid #0d0d0d; }
.status { display: flex; height: 102px; padding: 21px 58px 0 73px; align-items: flex-start; }
.clock { display: flex; width: 168px; align-items: center; padding-top: 18px; height: 44px; gap: 7px; }
.clock-time { width: 81px; font-size: 30px; font-weight: 600; letter-spacing: 0; line-height: 26px; color: #f6f6f6; white-space: nowrap; }
.island { width: 226px; height: 66px; border-radius: 33px; background: #000; display: flex; align-items: center; justify-content: flex-end; padding-right: 70px; }
.island-dot { width: 10px; height: 10px; border-radius: 50%; background: #ff9f17; }
.indicators { display: flex; align-items: center; margin-left: 40px; padding-top: 18px; height: 44px; }
.wifi { margin: 0 12px 0 11px; }
.battery { width: 46px; height: 25px; border-radius: 8px; background: linear-gradient(90deg, #fff 11px, #8b8b8b 11px); text-align: center; line-height: 25px; font-size: 21px; font-weight: 600; letter-spacing: -.3px; color: #1a1a1a; padding-right: 1px; }
.battery-tip { width: 3px; height: 8px; margin-left: 1px; border-radius: 0 3px 3px 0; background: #777; }

.nav { display: flex; align-items: center; height: 66px; padding-left: 15px; }
.avatar { width: 66px; height: 66px; margin-left: 70px; border-radius: 50%; background: #3b1b30; display: grid; place-items: center; }
.name { margin-left: 18px; width: 336px; font-size: 28px; line-height: 34px; font-weight: 600; letter-spacing: 0; color: #efefef; white-space: nowrap; }
.video { margin-top: -3px; }
.call { margin-left: 42px; margin-top: -3px; }

.chat { position: relative; height: 1220px; flex: none; background: #0a0a0a; overflow: hidden; }
.wallpaper { position: absolute; left: 0; top: 0; }
.doodle { stroke: #242424; stroke-width: 4; }
.low { stroke: #202020; }
.day { position: relative; display: flex; justify-content: center; padding-top: 23px; height: 75px; }
.day span { width: 79px; height: 34px; border-radius: 17px; background: #151616; color: #ececec; font-size: 22.500px; font-weight: 600; line-height: 35px; text-align: center; }
.messages { position: relative; display: flex; flex-direction: column; align-items: flex-start; padding-left: 31px; }
.bubble { display: flex; align-items: flex-end; justify-content: space-between; background: #242625; border-radius: 19px; padding: 8px 18px 11px 16px; color: #e2e3e3; margin-bottom: 9px; }
.bubble p { font-size: 30px; line-height: 40px; letter-spacing: -.56px; white-space: nowrap; }
.bubble time { margin-left: -60px; color: #959696; font-size: 22px; line-height: 20px; letter-spacing: .7px; margin-right: -.7px; white-space: nowrap; }
.b1 { width: 470px; height: 60px; }
.b2 { width: 484px; height: 100px; margin-bottom: 8px; }
.b3 { width: 378px; height: 60px; margin-bottom: 10px; }
.photo-row { display: flex; align-items: center; gap: 16px; }
.photo { position: relative; width: 451px; height: 632px; padding: 5px 6px 6px 5px; border-radius: 20px; background: #232625; }
.tail { position: absolute; left: -11px; bottom: -1px; }
.statement { position: relative; display: flex; flex-direction: column; width: 440px; height: 621px; border-radius: 15px; overflow: hidden; background: radial-gradient(ellipse 210px 60px at 100% 100%, #060b14, transparent), #10171f; font-family: Roboto, sans-serif; }
.stats { margin-top: -14px; height: 153px; padding: 0 16px; border-bottom: 2px solid #212934; flex: none; }
.row { display: flex; height: 28.600px; align-items: center; font-size: 16px; font-weight: 600; color: #e3e5e8; }
.row::after { content: ""; order: 1; flex: 1; height: 4px; margin: 6px 12px 0 20px; background: radial-gradient(circle, #2e3842 1.100px, transparent 1.700px) 0 0 / 9px 4px; }
.row dd { order: 2; font-size: 16.500px; font-weight: 700; letter-spacing: -.5px; }
.row .blue { color: #3f82e8; }
.trade { display: flex; justify-content: space-between; height: 55px; padding: 7px 15px 0 16px; border-bottom: 2px solid #212934; flex: none; white-space: nowrap; }
.pair, .prices { font-size: 18px; line-height: 20px; font-weight: 700; transform: scaleX(.83); transform-origin: left; color: #f1f2f4; width: 180px; }
.pair span { color: #d9434e; font-weight: 600; }
.prices { display: flex; align-items: center; gap: 5px; color: #8596ab; }
.prices svg { width: 20px; }
.trade-right { display: flex; flex-direction: column; align-items: flex-end; }
.stamp, .gain { font-size: 16px; line-height: 21px; transform: scaleX(.74); transform-origin: right; color: #8290a2; }
.gain { line-height: 19px; font-weight: 700; color: #4b8bea; transform: scaleX(.77); }
.photo-time { position: absolute; right: 11px; bottom: 11px; font-family: Inter, sans-serif; font-size: 22px; line-height: 24px; letter-spacing: 1px; color: #d3d6da; }
.forward { width: 57px; height: 57px; border: 0; padding: 0; border-radius: 50%; background: #414243; display: grid; place-items: center; }
.scrollbar { position: absolute; right: 6px; top: 916px; width: 5px; height: 300px; border-radius: 3px; background: #777; }

.composer { flex: 1; background: #111; }
.compose-row { display: flex; align-items: center; height: 54px; margin-top: 14px; padding-left: 23px; }
.field { width: 454px; height: 54px; margin-left: 24px; border-radius: 27px; background: #292929; display: flex; align-items: center; justify-content: flex-end; padding-right: 21px; }
.camera { margin-left: 32px; }
.mic { margin-left: 33px; margin-top: -3px; }
.home { width: 252px; height: 10px; margin: 50px auto 0; border-radius: 5px; background: #fff; }
```
